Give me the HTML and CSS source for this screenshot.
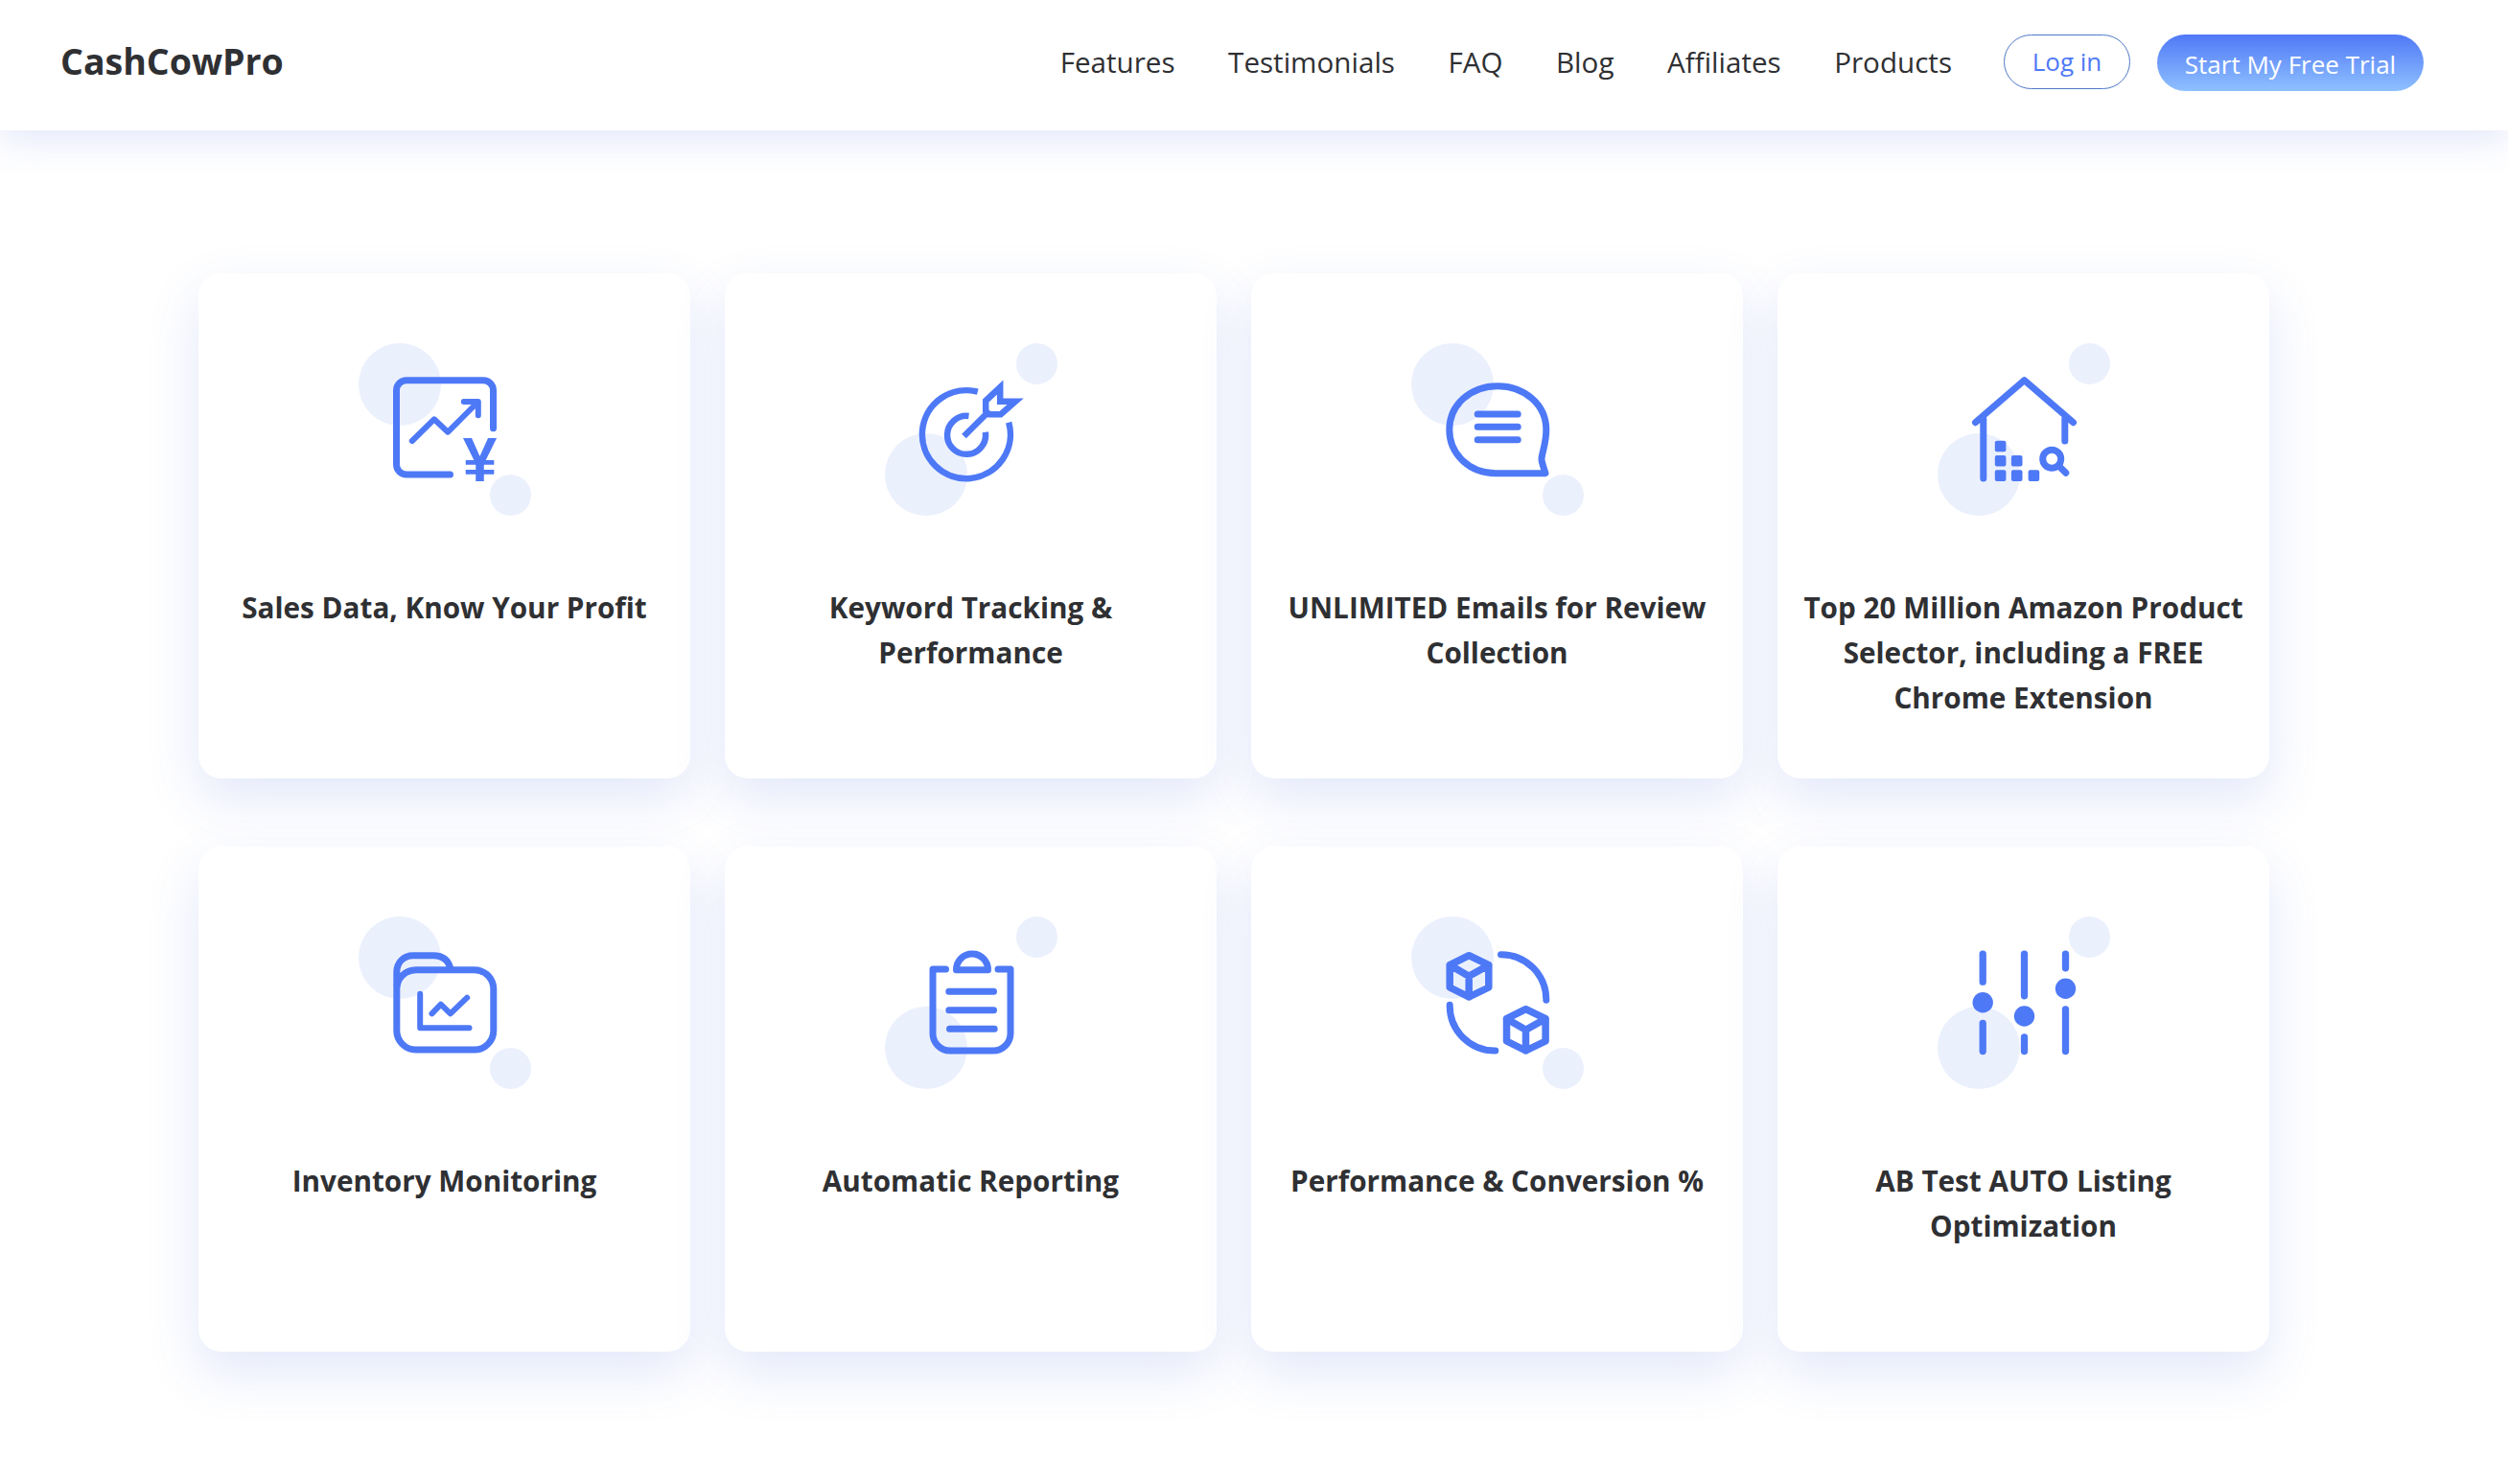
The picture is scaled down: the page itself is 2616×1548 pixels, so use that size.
FILE: index.html
```html
<!DOCTYPE html>
<html lang="en">
<head>
    <meta charset="UTF-8">
    <meta name="viewport" content="width=device-width, initial-scale=1.0">
    <title>CashCowPro</title>
    <link rel="stylesheet" href="styles.css">
</head>
<body>
    <header class="topbar">
        <a class="logo" href="#">CashCowPro</a>
        <nav class="nav">
            <a href="#">Features</a>
            <a href="#">Testimonials</a>
            <a href="#">FAQ</a>
            <a href="#">Blog</a>
            <a href="#">Affiliates</a>
            <a href="#">Products</a>
        </nav>
        <a class="btn-login" href="#">Log in</a>
        <a class="btn-trial" href="#">Start My Free Trial</a>
    </header>

    <main class="grid">
        <div class="card">
            <svg class="icon" viewBox="0 0 180 180">
                <circle class="dot" cx="43" cy="43" r="43"/>
                <circle class="dot" cx="158.5" cy="158.5" r="21.5"/>
                <path class="line" d="M95.5 137H50a10.500 10.500 0 0 1-10.500-10.500V49.200A10.500 10.500 0 0 1 50 38.700h80a10.500 10.500 0 0 1 10.500 10.500v39.500"/>
                <path class="line thin" d="M55.800 102l23-22.700 14.400 13.400 30.600-30.700M109.800 61h15v14.300"/>
                <text class="yen" x="126.500" y="144">¥</text>
            </svg>
            <h3>Sales Data, Know Your Profit</h3>
        </div>
        <div class="card">
            <svg class="icon" viewBox="0 0 180 180">
                <circle class="dot" cx="158.500" cy="21.500" r="21.500"/>
                <circle class="dot" cx="43" cy="137" r="43"/>
                <path class="sharp" d="M96.800 50.700A46 46 0 1 0 129.200 82.700"/>
                <path class="sharp" d="M87.500 76A20 20 0 1 0 104.800 92.700"/>
                <path class="sharp" d="M82.500 97l23.300-23.300"/>
                <path class="sharp" d="M120.200 46l-15 14v10.700l3.600 3.600h12l15.400-13.600h-16z"/>
            </svg>
            <h3>Keyword Tracking &amp; Performance</h3>
        </div>
        <div class="card">
            <svg class="icon" viewBox="0 0 180 180">
                <circle class="dot" cx="43" cy="43" r="43"/>
                <circle class="dot" cx="158.500" cy="158.500" r="21.500"/>
                <path class="line" d="M140 135.700H88C60 135.700 39.800 115 39.800 90.300 39.800 64 62 44.700 90.200 44.700c27.800 0 50.600 19.300 50.600 45.600 0 13.700-3.800 21.700-4.800 29.700-.3 4 2 9 4 15.700z"/>
                <path class="line" d="M69.200 74h42M69.200 87.300h42M69.200 100.700h42"/>
            </svg>
            <h3>UNLIMITED Emails for Review Collection</h3>
        </div>
        <div class="card">
            <svg class="icon" viewBox="0 0 180 180">
                <circle class="dot" cx="158.500" cy="21.500" r="21.500"/>
                <circle class="dot" cx="43" cy="137" r="43"/>
                <path class="line" d="M39.500 82.700l51-44 51 44M47.800 78.700V141M132.800 78.700V102"/>
                <rect class="solid" x="59.800" y="101.700" width="11.600" height="11.600" rx="2"/>
                <rect class="solid" x="59.800" y="117" width="11.600" height="11.600" rx="2"/>
                <rect class="solid" x="59.800" y="132.300" width="11.600" height="11.600" rx="2"/>
                <rect class="solid" x="76.900" y="117" width="11.600" height="11.600" rx="2"/>
                <rect class="solid" x="76.900" y="132.300" width="11.600" height="11.600" rx="2"/>
                <rect class="solid" x="94.600" y="132.300" width="11.600" height="11.600" rx="2"/>
                <circle class="line" cx="119.200" cy="120.700" r="9.500"/>
                <path class="line" d="M127.200 128.700l6.600 6.600"/>
            </svg>
            <h3>Top 20 Million Amazon Product Selector, including a FREE Chrome Extension</h3>
        </div>
        <div class="card">
            <svg class="icon" viewBox="0 0 180 180">
                <circle class="dot" cx="43" cy="43" r="43"/>
                <circle class="dot" cx="158.500" cy="158.500" r="21.500"/>
                <rect class="line" x="39.800" y="55.700" width="101" height="83.300" rx="20"/>
                <path class="line" d="M39.800 72V58c0-10 7.200-17.300 17.200-17.300h21c10 0 16 5.300 18 14.300"/>
                <path class="line thin" d="M64.200 80.700v35.600h51.300M76.500 101.300l9.300-9.600 10 9.600 17.400-16.600"/>
            </svg>
            <h3>Inventory Monitoring</h3>
        </div>
        <div class="card">
            <svg class="icon" viewBox="0 0 180 180">
                <circle class="dot" cx="158.500" cy="21.500" r="21.500"/>
                <circle class="dot" cx="43" cy="137" r="43"/>
                <path class="line" d="M63.500 55H50v67a18 18 0 0 0 18 18h45a18 18 0 0 0 18-18V55h-13"/>
                <path class="line" d="M74.500 55.700C74.500 46 82 39 91 39s16.500 7 16.500 16.700z"/>
                <path class="line" d="M66.800 78.300h46.700M66.800 97.700h46.700M67.500 117.300h46.700"/>
            </svg>
            <h3>Automatic Reporting</h3>
        </div>
        <div class="card">
            <svg class="icon" viewBox="0 0 180 180">
                <circle class="dot" cx="43" cy="43" r="43"/>
                <circle class="dot" cx="158.500" cy="158.500" r="21.500"/>
                <path class="line" d="M93.500 39.700a47 47 0 0 1 47.300 47.600M40.200 92.300A47 47 0 0 0 87.800 140"/>
                <path class="line cube" d="M60.200 40.700l20.600 10V74l-20.600 10-20-10V50.700zM40.200 50.700l20 11.600 20.600-11.600M60.200 62.300V84"/>
                <path class="line cube" transform="translate(59.300 56)" d="M60.200 40.700l20.600 10V74l-20.600 10-20-10V50.700zM40.200 50.700l20 11.600 20.600-11.600M60.200 62.300V84"/>
            </svg>
            <h3>Performance &amp; Conversion %</h3>
        </div>
        <div class="card">
            <svg class="icon" viewBox="0 0 180 180">
                <circle class="dot" cx="158.500" cy="21.500" r="21.500"/>
                <circle class="dot" cx="43" cy="137" r="43"/>
                <path class="line thick" d="M47.200 39.200v29M47.200 111.500v29M90.500 39.200v43.600M90.500 125.800v14.700M133.500 39.200v14.600M133.500 96.800v43.700"/>
                <circle class="solid" cx="47.200" cy="89.700" r="10.700"/>
                <circle class="solid" cx="90.500" cy="104" r="10.700"/>
                <circle class="solid" cx="133.500" cy="75.300" r="10.700"/>
            </svg>
            <h3>AB Test AUTO Listing Optimization</h3>
        </div>
    </main>
</body>
</html>
```

FILE: styles.css
```css
body {
    margin: 0;
    background-color: #FFFFFF;
    color: #2F3033;
    font-family: "Open Sans", "Liberation Sans", sans-serif;
}

a {
    text-decoration: none;
    color: inherit;
}

.topbar {
    display: flex;
    align-items: center;
    box-sizing: border-box;
    height: 136px;
    padding: 0 88px 8px 63px;
    background-color: #FFFFFF;
    box-shadow: 0 6px 40px rgba(70, 100, 220, 0.18);
}

.logo {
    font-size: 37.500px;
    font-weight: 700;
    margin-right: auto;
    margin-top: -2px;
}

.nav {
    display: flex;
    gap: 55.500px;
    font-size: 29.600px;
}

.btn-login {
    display: flex;
    align-items: center;
    justify-content: center;
    box-sizing: border-box;
    width: 132px;
    height: 57px;
    margin-left: 54px;
    border: 1px solid #5079C8;
    border-radius: 29px;
    color: #4E79F6;
    font-size: 26px;
}

.btn-trial {
    display: flex;
    align-items: center;
    justify-content: center;
    width: 278px;
    height: 59px;
    margin-top: 2px;
    margin-left: 28px;
    padding-top: 4px;
    box-sizing: border-box;
    border-radius: 30px;
    background: linear-gradient(180deg, #5079F6, #8FC0FF);
    color: #FFFFFF;
    font-size: 26px;
}

.grid {
    display: grid;
    grid-template-columns: repeat(4, 513px);
    grid-auto-rows: 527px;
    column-gap: 36px;
    row-gap: 71px;
    padding: 149px 0 138px 207px;
}

.card {
    display: flex;
    flex-direction: column;
    align-items: center;
    box-sizing: border-box;
    padding: 73px 20px 0;
    border-radius: 24px;
    background-color: #FFFFFF;
    box-shadow: 0 22px 54px rgba(70, 100, 220, 0.15);
}

.icon {
    width: 180px;
    height: 180px;
    flex: none;
}

.card h3 {
    margin: 72px 0 0;
    font-size: 29.700px;
    line-height: 47px;
    font-weight: 700;
    text-align: center;
}

.dot {
    fill: #EBF0FD;
}

.solid {
    fill: #4E79F6;
}

.line {
    fill: none;
    stroke: #4E79F6;
    stroke-width: 7;
    stroke-linecap: round;
    stroke-linejoin: round;
}

.thin {
    stroke-width: 6;
}

.thick {
    stroke-width: 7.300;
}

.cube {
    stroke-width: 7.500;
}

.sharp {
    fill: none;
    stroke: #4E79F6;
    stroke-width: 6.500;
}

.yen {
    fill: #4E79F6;
    font-family: "Liberation Sans", sans-serif;
    font-size: 64px;
    font-weight: 700;
    text-anchor: middle;
}
```
